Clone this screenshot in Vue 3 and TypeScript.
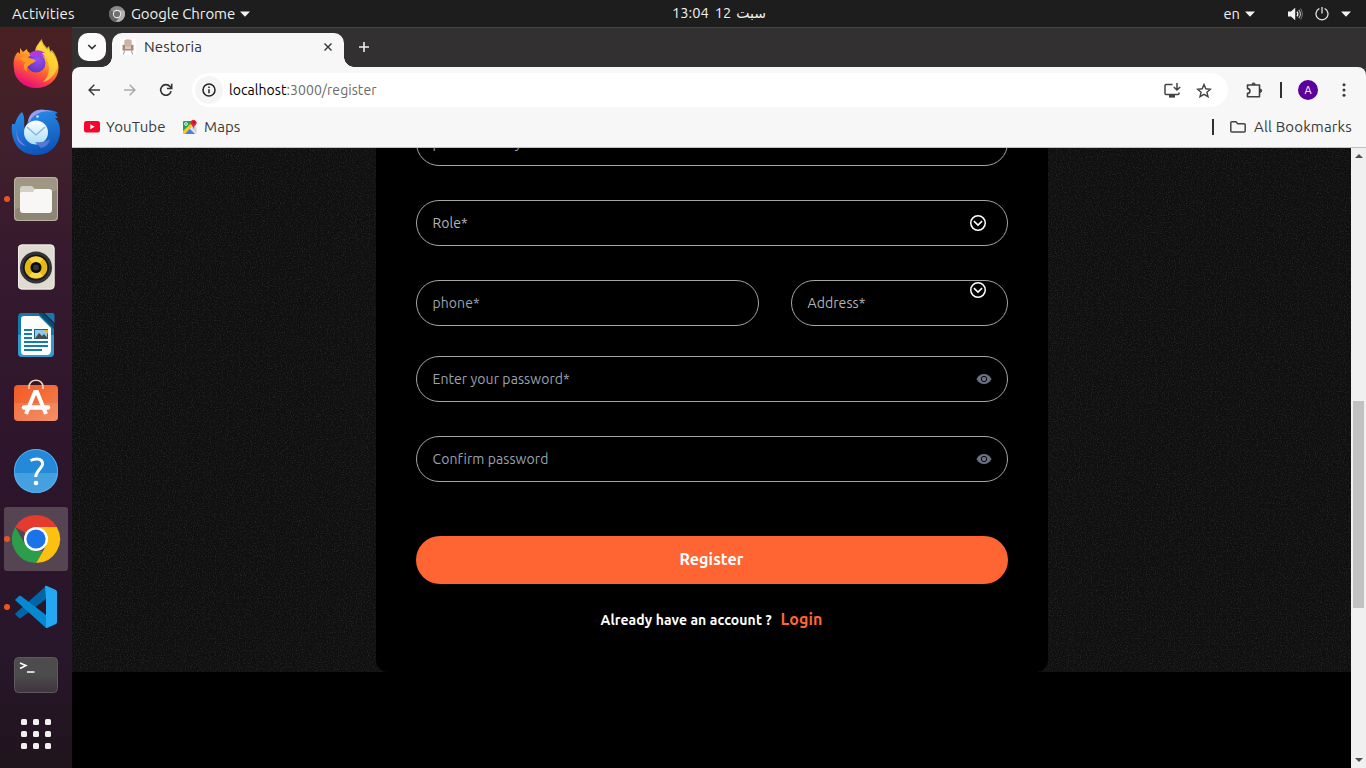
<script setup lang="ts">
interface Field {
  label: string
  icon?: 'chevron' | 'eye'
  tone: 'select' | 'input'
  cls: string
}

const topFields: Field[] = [
  { label: 'please enter your email*', tone: 'input', cls: 'email' },
  { label: 'Role*', icon: 'chevron', tone: 'select', cls: 'role' },
]
const pairFields: Field[] = [
  { label: 'phone*', tone: 'input', cls: 'phone' },
  { label: 'Address*', icon: 'chevron', tone: 'select', cls: 'address' },
]
const passwordFields: Field[] = [
  { label: 'Enter your password*', icon: 'eye', tone: 'input', cls: 'password' },
  { label: 'Confirm password', icon: 'eye', tone: 'input', cls: 'confirm' },
]
const gridDots = [0, 1, 2, 3, 4, 5, 6, 7, 8]
</script>

<template>
  <div class="desktop">
    <header class="topbar">
      <span class="activities">Activities</span>
      <svg class="app-icon" width="16" height="16" viewBox="0 0 16 16">
        <circle cx="8" cy="8" r="8" fill="#8b8b8b" />
        <path d="M8 8 1.100 4A8 8 0 0 0 7 15.900l3.500-6Z" fill="#666" />
        <path d="M8 4.300h7.100A8 8 0 0 1 7 15.900L11.400 9.800Z" fill="#b0b0b0" />
        <circle cx="8" cy="8" r="4.200" fill="#e8e8e8" />
        <circle cx="8" cy="8" r="3.100" fill="#707070" />
      </svg>
      <span class="app-name">Google Chrome</span>
      <svg class="app-caret" width="10" height="6" viewBox="0 0 10 6"><path d="M0 .5h10L5 5.800Z" fill="#f2f2f2" /></svg>
      <div class="clock" dir="ltr"><span class="time">13:04</span><span class="day">12</span><span class="arabic">سبت</span></div>
      <div class="status">
        <span class="lang">en</span>
        <svg class="lang-caret" width="10" height="6" viewBox="0 0 10 6"><path d="M0 .5h10L5 5.800Z" fill="#f2f2f2" /></svg>
        <svg class="volume" width="15" height="14" viewBox="0 0 15 14">
          <path d="M0 4.600h3L7.200.8v12.400L3 9.400H0Z" fill="#f2f2f2" />
          <path d="M9 4.600q1.700 2.400 0 4.800" fill="none" stroke="#f2f2f2" stroke-width="1.300" />
          <path d="M10.800 2.800q3.200 4.200 0 8.400" fill="none" stroke="#c4c4c4" stroke-width="1.100" />
          <path d="M12.600 1.500q3.500 5.500 0 11" fill="none" stroke="#777" stroke-width="1" />
        </svg>
        <svg class="power" width="14" height="14" viewBox="0 0 14 14">
          <path d="M4.400 1.500a6 6 0 1 0 5.200 0M7 0v6.400" fill="none" stroke="#f0f0f0" stroke-width="1.200" />
        </svg>
        <svg class="menu-caret" width="10" height="6" viewBox="0 0 10 6"><path d="M0 .5h10L5 5.800Z" fill="#f2f2f2" /></svg>
      </div>
    </header>

    <div class="workspace">
      <aside class="dock">
        <div class="slot">
          <svg width="72" height="68" viewBox="0 0 72 68">
            <defs>
              <linearGradient id="ffBody" x1=".8" y1="0" x2=".35" y2="1">
                <stop offset="0" stop-color="#fff04a" /><stop offset=".35" stop-color="#ffb22a" /><stop offset=".65" stop-color="#ff5a35" /><stop offset="1" stop-color="#e8087f" />
              </linearGradient>
              <radialGradient id="ffGlobe" cx=".6" cy=".3" r=".8">
                <stop offset="0" stop-color="#9a4df5" /><stop offset="1" stop-color="#5a34b5" />
              </radialGradient>
            </defs>
            <path d="M20 17 23 21l4-3c0 2 1 3 3 4h5c0-5 2-9 7-12 0 4 3 6 5 9l2-2 1 5 2-1c4 6 7 11 6.500 16a22.300 20 0 0 1-44.600 0c-.9-7 .1-12 4.100-16l2 2Z" transform="translate(0 2)" fill="url(#ffBody)" />
            <path d="M37 22c0-5 2-10 5-12 0 4 3 6 5 9l2-2 1 5 2-1c5 6 7 13 5 19-3 7-8 12-14 13 8-7 7-19 2-26Z" fill="#ffd93a" opacity=".75" />
            <circle cx="36" cy="34" r="9.500" fill="url(#ffGlobe)" />
            <path d="M19 29q7-3 10 0l7 2c-1 3-5 3-6 5-3 1-4 4-3 7-4-3-4-8-1-10-3-1-5-1-7-4Z" fill="#ff9a1f" />
            <path d="M29 25q8-7 16-1l-3 0 3 4q-6-4-12 0Z" fill="#b03adf" />
          </svg>
        </div>
        <div class="slot">
          <svg width="72" height="68" viewBox="0 0 72 68">
            <defs>
              <linearGradient id="tbBody" x1=".3" y1="0" x2=".6" y2="1">
                <stop offset="0" stop-color="#2b8fea" /><stop offset="1" stop-color="#0c52b8" />
              </linearGradient>
              <linearGradient id="tbMail" x1="0" y1="0" x2="0" y2="1">
                <stop offset="0" stop-color="#fff" /><stop offset="1" stop-color="#a9dcf8" />
              </linearGradient>
            </defs>
            <path d="M12 27c-2 17 7 31 24 31 16 0 24-12 24-24 0-7-2-10-5-13l3 0-3-4 3-1c-5-3-9-3-12-3-9-2-16 2-18 11l-3 8c-2-5 1-11-3-17-4 3-6 8-7 12Z" fill="url(#tbBody)" />
            <path d="M28 24q2-9 10-11 8-1 15 2-10-2-16 2-6 3-7 8Z" fill="#9e9bf0" />
            <path d="M17 29q-2 13 9 20-12-2-9-20Z" fill="#8a7ae0" />
            <circle cx="36" cy="35.500" r="12" fill="url(#tbMail)" />
            <path d="m27 30 9 8 9-8" fill="none" stroke="#8bb9df" stroke-width="1.500" />
            <path d="M50 42q-6 4-15 3l6 6q8-2 9-9Z" fill="#5678d5" />
            <circle cx="37.500" cy="19.500" r="1.300" fill="#bce9ff" />
          </svg>
        </div>
        <div class="slot">
          <i class="running"></i>
          <svg width="72" height="68" viewBox="0 0 72 68">
            <rect x="14" y="12" width="44" height="44" rx="4" fill="#9f9784" />
            <path d="M14 45 58 24v28q0 4-4 4H18q-4 0-4-4Z" fill="#8e8674" />
            <rect x="14.500" y="12.500" width="43" height="43" rx="4" fill="none" stroke="#b9b3a3" />
            <path d="M20 24q0-3 3-3h9l3 3h14v6H20Z" fill="#d3cfc5" />
            <path d="M20 29q0-2 2-2h11l2-3h14q3 0 3 3v18q0 3-3 3H23q-3 0-3-3Z" fill="#f8f7f5" />
          </svg>
        </div>
        <div class="slot">
          <svg width="72" height="68" viewBox="0 0 72 68">
            <rect x="18" y="11.500" width="36.500" height="45" rx="4" fill="#dfdbd0" />
            <rect x="18.500" y="12" width="35.500" height="44" rx="3.500" fill="none" stroke="#f0eee8" />
            <circle cx="36" cy="34.500" r="16" fill="#33333b" />
            <circle cx="36" cy="34.500" r="13" fill="#15161a" />
            <circle cx="36" cy="34.500" r="11.300" fill="#e7b90e" />
            <path d="M36 34.500 29 26q7-5 14 0Zm0 0 7 8.500q-7 4-14 0Z" fill="#fad64b" />
            <circle cx="36" cy="34.500" r="5.500" fill="#090909" />
            <circle cx="36" cy="34.500" r="3" fill="#343434" />
          </svg>
        </div>
        <div class="slot">
          <svg width="72" height="68" viewBox="0 0 72 68">
            <path d="M22 12h18l14 14v26q0 4-4 4H22q-4 0-4-4V16q0-4 4-4Z" fill="#1677aa" />
            <path d="M18 34h36v18q0 4-4 4H22q-4 0-4-4Z" fill="#349aca" />
            <path d="M24 15h15l12 12v22q0 5-4 5H24q-3 0-3-4V18q0-3 3-3Z" fill="#fdfdfd" />
            <path d="M44.500 12h8q2 0 2 2v8Z" fill="#1b79aa" />
            <path d="m39 13 15 15v-5L43 12h-4Z" fill="#064d73" />
            <path d="M24 29h8m-8 4h8m-8 4h8m-8 4h24m-24 4h24m-24 4h18" stroke="#167bad" stroke-width="1.800" />
            <rect x="34.500" y="28.500" width="13" height="9" fill="#8dccf0" stroke="#17648b" />
            <path d="m35 37.500 4-5.500 3 3 2-2 4 4.500Z" fill="#514a43" />
            <path d="M44 29h4v4Z" fill="#f5b900" />
          </svg>
        </div>
        <div class="slot">
          <svg width="72" height="68" viewBox="0 0 72 68">
            <defs><linearGradient id="bag" x1="0" y1="0" x2="1" y2="1"><stop offset="0" stop-color="#f15a24" /><stop offset="1" stop-color="#f28355" /></linearGradient></defs>
            <rect x="14" y="16" width="44" height="36" rx="4" fill="url(#bag)" />
            <path d="M14 34h44v14q0 4-4 4H18q-4 0-4-4Z" fill="#fff" opacity=".1" />
            <path d="M29 20v-2c0-9 14-9 14 0v2" fill="none" stroke="#f3d4b1" stroke-width="1.600" />
            <path d="m26 45 9-22h2l9 22" fill="none" stroke="#fff" stroke-width="4" />
            <path d="M24 38.500h24" stroke="#fff" stroke-width="4.500" stroke-linecap="round" />
          </svg>
        </div>
        <div class="slot">
          <svg width="72" height="68" viewBox="0 0 72 68">
            <circle cx="36" cy="34" r="22" fill="#2489d8" />
            <path d="M14 36h44a22 20 0 0 1-44 0Z" fill="#45a0e0" />
            <circle cx="36" cy="34" r="21.500" fill="none" stroke="#58ade7" />
            <path d="M30.500 23.500q3-1.500 6.500-1.500c4 0 6 2.500 5.500 5.500-.6 4-6.500 6-6.800 12.500" fill="none" stroke="#fff" stroke-width="3" />
            <circle cx="36" cy="46" r="2.300" fill="#fff" />
          </svg>
        </div>
        <div class="slot active">
          <i class="running"></i>
          <svg width="72" height="68" viewBox="0 0 72 68">
            <path d="M36 34 15.200 22A24 24 0 0 1 56.800 22Z" fill="#e33b2e" />
            <path d="M36 34V22h20.800A24 24 0 0 1 36 58l10.400-18Z" fill="#fcc010" />
            <path d="M15.200 22 25.600 40 36 46h7L36 58A24 24 0 0 1 15.200 22Z" fill="#2c9d48" />
            <circle cx="36" cy="34" r="12" fill="#fff" />
            <circle cx="36" cy="34" r="9.600" fill="#1a73e8" />
          </svg>
        </div>
        <div class="slot">
          <i class="running"></i>
          <svg width="72" height="68" viewBox="0 0 72 68">
            <path d="m46 13-28 25-3 3 4 4q1 .5 2 0l25-19Z" fill="#0065a9" />
            <path d="m15 27 4-4q1-.5 2 0l25 19v13Z" fill="#0788d1" />
            <path d="M45 13q1-.5 2 0l9 4q1 1 1 2v30q0 1-1 2l-9 4-1 0V26Z" fill="#24a8f2" />
          </svg>
        </div>
        <div class="slot">
          <svg width="72" height="68" viewBox="0 0 72 68">
            <defs><linearGradient id="term" x1="0" y1="0" x2="0" y2="1"><stop offset=".5" stop-color="#4c4c4c" /><stop offset="1" stop-color="#40333f" /></linearGradient></defs>
            <rect x="14.500" y="16.500" width="43" height="35" rx="4" fill="url(#term)" stroke="#5c5a5c" />
            <path d="m20 22 6 2.500-6 3M27 31h7.500" fill="none" stroke="#fff" stroke-width="1.500" />
          </svg>
        </div>
        <div class="launcher"><i v-for="d in gridDots" :key="d"></i></div>
      </aside>

      <main class="browser">
        <div class="tabstrip">
          <div class="tab-search">
            <svg width="10" height="6" viewBox="0 0 10 6"><path d="m1.300 1 3.700 3.600L8.700 1" fill="none" stroke="#303030" stroke-width="1.600" /></svg>
          </div>
          <div class="tab">
            <svg class="favicon" width="16" height="16" viewBox="0 0 16 16">
              <rect width="16" height="16" fill="#fff" />
              <path d="M4.500 1q3.500-1.500 7 0l.5 7H4Z" fill="#cdb3a6" />
              <path d="M2.500 6q2-1 2.500 1v3h6V7q.5-2 2.500-1v5.500h-11Z" fill="#a88779" />
              <path d="M5 7.500h6V10H5Z" fill="#dcc6b9" />
              <path d="m4.500 11.500-1 4m8-4 1 4" stroke="#a38b80" />
            </svg>
            <span class="tab-title">Nestoria</span>
            <svg class="tab-close" width="8" height="8" viewBox="0 0 8 8"><path d="m.5.5 7 7m0-7-7 7" stroke="#333" stroke-width="1.400" /></svg>
          </div>
          <svg class="new-tab" width="10" height="10" viewBox="0 0 10 10"><path d="M5 0v10M0 5h10" stroke="#eee" stroke-width="1.600" /></svg>
        </div>

        <div class="chrome-ui">
          <div class="toolbar">
            <svg class="back" width="12" height="12" viewBox="0 0 12 12"><path d="M12 6H1.300M6.300.8 1.100 6l5.200 5.200" fill="none" stroke="#3a3a3a" stroke-width="1.500" /></svg>
            <svg class="forward" width="12" height="12" viewBox="0 0 12 12"><path d="M0 6h10.700M5.700.8 10.900 6l-5.200 5.200" fill="none" stroke="#aaa" stroke-width="1.500" /></svg>
            <svg class="reload" width="14" height="14" viewBox="0 0 14 14"><path d="M12.100 8.100A5.300 5.300 0 1 1 11 3.500l1.500 1.700M12.700.8v4.700H8" fill="none" stroke="#333" stroke-width="1.600" /></svg>
            <div class="omnibox">
              <div class="site-info">
                <svg width="14" height="14" viewBox="0 0 14 14"><circle cx="7" cy="7" r="6" fill="none" stroke="#222" stroke-width="1.500" /><path d="M7 6.300v4M7 3.500v1.500" stroke="#222" stroke-width="1.500" /></svg>
              </div>
              <span class="url"><b>localhost</b>:3000/register</span>
              <svg class="install" width="17" height="15" viewBox="0 0 17 15">
                <path d="M8.500 1.500H2q-1 0-1 1v8q0 1 1 1h12q1 0 1-1V9.500M5 13.500h6M13 0v6.500M9.800 4 13 7l3.200-3" fill="none" stroke="#444" stroke-width="1.500" />
                <path d="M5 12h6v2.500H5Z" fill="#444" />
              </svg>
              <svg class="star" width="16" height="15" viewBox="0 0 16 15"><path d="m8 1.500 1.800 4.300 4.700.4-3.600 3 1.100 4.500-4-2.400-4 2.400 1.100-4.500-3.600-3 4.700-.4Z" fill="none" stroke="#444" stroke-width="1.400" /></svg>
            </div>
            <svg class="puzzle" width="17" height="17" viewBox="0 0 17 17">
              <path d="M1.500 3h12v11.700h-12v-3.300a2.300 2.300 0 0 0 0-4.800Z" fill="none" stroke="#404040" stroke-width="1.600" stroke-linejoin="round" />
              <path d="M6 2.500a1.600 1.600 0 0 1 3.200 0ZM14 7a1.600 1.600 0 0 1 0 3.400Z" fill="#404040" stroke="#404040" />
            </svg>
            <i class="bar"></i>
            <div class="avatar">A</div>
            <svg class="kebab" width="4" height="14" viewBox="0 0 4 14"><g fill="#3a3a3a"><circle cx="2" cy="1.800" r="1.500" /><circle cx="2" cy="7" r="1.500" /><circle cx="2" cy="12.200" r="1.500" /></g></svg>
          </div>
          <div class="bookmarks">
            <svg class="yt" width="16" height="12" viewBox="0 0 16 12"><rect width="16" height="11.500" rx="2.500" fill="#f8042d" /><path d="m6.300 3.300 4.300 2.500-4.300 2.500Z" fill="#fff" /></svg>
            <span class="bm-youtube">YouTube</span>
            <svg class="maps" width="16" height="16" viewBox="0 0 16 16">
              <rect x="1" y="2" width="13" height="13" rx="1" fill="#dfe3ea" />
              <path d="M1 3q0-1 1-1h7v5L1 14.500Z" fill="#1da35a" />
              <path d="m2 15 5.500-5.500L13 15Z" fill="#4c7ee9" />
              <path d="m9 8 5.500 6.500V9L11 6Z" fill="#cdd2da" />
              <path d="m1 12 8-7.500v4L3 15H1Z" fill="#fbc822" />
              <path d="M11.500 10q-.3-2.500-2-4A3 3 0 1 1 14 5.500q-2.200 2-2.500 4.500Z" fill="#e8243c" />
              <circle cx="11.800" cy="3.300" r="1.100" fill="#8d1020" />
              <circle cx="4" cy="5" r="1.400" fill="none" stroke="#fff" stroke-width=".9" />
            </svg>
            <span class="bm-maps">Maps</span>
            <i class="bar"></i>
            <svg class="folder" width="16" height="12" viewBox="0 0 16 12"><path d="M.8 10V1.800q0-1 1-1h4l2 2h6.400q1 0 1 1V10q0 1-1 1H1.800q-1 0-1-1Z" fill="none" stroke="#444" stroke-width="1.500" /></svg>
            <span class="bm-all">All Bookmarks</span>
          </div>
        </div>

        <div class="viewport">
          <div class="page">
            <section class="register-section">
              <svg class="grain" width="1279" height="524">
                <filter id="grain" x="0" y="0" width="100%" height="100%" color-interpolation-filters="sRGB">
                  <feTurbulence type="fractalNoise" baseFrequency=".83" numOctaves="2" seed="4" />
                  <feColorMatrix values="1 0 0 0 0  1 0 0 0 0  1 0 0 0 0  0 0 0 0 1" />
                  <feComponentTransfer>
                    <feFuncR type="table" tableValues=".06 .06 .06 .06 .061 .066 .095 .12 .14 .14 .14" />
                    <feFuncG type="table" tableValues=".06 .06 .06 .06 .061 .066 .095 .12 .14 .14 .14" />
                    <feFuncB type="table" tableValues=".06 .06 .06 .06 .061 .066 .095 .12 .14 .14 .14" />
                  </feComponentTransfer>
                </filter>
                <rect width="1279" height="524" filter="url(#grain)" />
              </svg>
              <form class="card" @submit.prevent>
                <div v-for="f in topFields" :key="f.label" class="field" :class="[f.tone, f.cls]">
                  <span>{{ f.label }}</span>
                  <svg v-if="f.icon" class="chevron" width="16" height="16" viewBox="0 0 16 16"><circle cx="8" cy="8" r="7.250" fill="none" stroke="#fff" stroke-width="1.500" /><path d="m3.900 6.100 4.100 4 4.100-4" fill="none" stroke="#fff" stroke-width="1.500" /></svg>
                </div>
                <div class="pair">
                  <div v-for="f in pairFields" :key="f.label" class="field" :class="[f.tone, f.cls]">
                    <span>{{ f.label }}</span>
                    <svg v-if="f.icon" class="chevron" width="16" height="16" viewBox="0 0 16 16"><circle cx="8" cy="8" r="7.250" fill="none" stroke="#fff" stroke-width="1.500" /><path d="m3.900 6.100 4.100 4 4.100-4" fill="none" stroke="#fff" stroke-width="1.500" /></svg>
                  </div>
                </div>
                <div v-for="f in passwordFields" :key="f.label" class="field" :class="[f.tone, f.cls]">
                  <span>{{ f.label }}</span>
                  <svg class="eye" width="16" height="12" viewBox="0 0 16 12"><path d="M.5 6C3.500-.8 12.500-.8 15.500 6c-3 6.800-12 6.800-15 0Z" fill="#6b7080" /><circle cx="8" cy="6" r="2.700" fill="none" stroke="#0b0b0f" stroke-width="1" /></svg>
                </div>
                <button class="submit" type="submit"><span>Register</span></button>
                <p class="signin"><span class="question">Already have an account ?</span><a class="login">Login</a></p>
              </form>
            </section>
          </div>
          <div class="scrollbar">
            <svg width="8" height="4" viewBox="0 0 8 4"><path d="M0 4 4 0l4 4Z" fill="#505050" /></svg>
            <div class="thumb"></div>
            <svg class="down" width="8" height="4" viewBox="0 0 8 4"><path d="m0 0 4 4 4-4Z" fill="#505050" /></svg>
          </div>
        </div>
      </main>
    </div>
  </div>
</template>

<style>
html, body { margin: 0; background: #000; }
</style>

<style scoped>
.desktop { width: 1366px; height: 768px; overflow: hidden; display: flex; flex-direction: column; font: 15px/20px "Ubuntu", "Noto Sans", "DejaVu Sans", sans-serif; }
.desktop * { box-sizing: border-box; }
svg { display: block; flex: none; }
span { white-space: nowrap; }

.topbar { height: 27px; flex: none; background: #1d1d1d; color: #f0f0f0; display: flex; align-items: center; padding: 0 15px 0 12px; }
.activities { width: 97px; letter-spacing: .1px; }
.app-icon { margin-right: 6px; }
.app-name { width: 109px; letter-spacing: -.08px; }
.clock { margin-left: 422px; display: flex; align-items: center; font-size: 14.670px; height: 20px; margin-top: -1px; }
.day { margin-left: 6px; }
.arabic { margin-left: 5px; font-family: "DejaVu Sans", sans-serif; font-size: 14px; }
.status { margin-left: auto; display: flex; align-items: center; font-size: 14.670px; }
.lang-caret { margin-left: 5px; margin-right: 33px; }
.volume { margin-right: 12px; }
.power { margin-right: 12px; }

.workspace { flex: 1; display: flex; min-height: 0; }
.dock { width: 72px; flex: none; padding-top: 2px; background: linear-gradient(#4a2022, #40202b 15%, #36192e 32%, #2d152b 60%, #28162a 85%, #20141c); }
.slot { height: 68px; position: relative; }
.slot svg { position: relative; }
.slot.active::before { content: ""; position: absolute; left: 4px; top: 2px; width: 64px; height: 64px; border-radius: 3px; background: #554452; }
.running { position: absolute; z-index: 1; left: 4px; top: 31px; width: 6px; height: 6px; border-radius: 50%; background: #e95420; }
.launcher { margin: 10px 0 0 21px; width: 30px; display: grid; grid-template-columns: repeat(3, 6px); gap: 6px; }
.launcher i { height: 6px; border-radius: 1.5px; background: #f1f0ed; }

.browser { flex: 1; min-width: 0; display: flex; flex-direction: column; background: #323031; }
.tabstrip { height: 40px; flex: none; border-top: 1px solid #454344; padding: 5px 0 0 6px; display: flex; color: #333; }
.tab-search { width: 28px; height: 28px; border-radius: 10px; background: #fbfbfb; display: flex; align-items: center; justify-content: center; }
.tab { position: relative; margin-left: 6px; width: 232px; height: 34px; border-radius: 10px 10px 0 0; background: #f7f7f7; display: flex; align-items: center; padding: 0 12px 6px 8px; }
.tab::before, .tab::after { content: ""; position: absolute; bottom: 0; width: 10px; height: 10px; }
.tab::before { left: -10px; background: radial-gradient(circle at 0 0, transparent 9.500px, #f7f7f7 10px); }
.tab::after { right: -10px; background: radial-gradient(circle at 100% 0, transparent 9.500px, #f7f7f7 10px); }
.tab-title { margin-left: 8px; letter-spacing: .1px; }
.tab-close { margin-left: auto; }
.new-tab { margin: 9px 0 0 15px; }

.chrome-ui { height: 81px; flex: none; background: #f7f7f7; border-bottom: 1px solid #c2c2c2; border-radius: 8px 8px 0 0; color: #3a3a3a; }
.toolbar { height: 46px; display: flex; align-items: center; padding: 0 20px 0 16px; }
.forward { margin-left: 24px; }
.reload { margin-left: 23px; }
.omnibox { flex: none; margin-left: 19px; width: 1036px; height: 34px; border-radius: 17px; background: #fff; display: flex; align-items: center; padding: 0 16px 0 3px; }
.site-info { width: 28px; height: 28px; border-radius: 50%; background: #f5f5f5; display: flex; align-items: center; justify-content: center; }
.url { margin-left: 6px; color: #6b6b6b; font-size: 14px; letter-spacing: .06px; }
.url b { font-weight: 400; color: #000; }
.install { margin-left: auto; }
.star { margin-left: 15px; }
.puzzle { margin-left: 18px; }
.bar { flex: none; width: 2px; height: 16px; background: #303030; }
.toolbar .bar { margin-left: 17px; }
.avatar { flex: none; margin-left: 16px; width: 20px; height: 20px; border-radius: 50%; background: #5b009c; color: #fff; font-size: 11px; text-align: center; line-height: 20px; }
.kebab { margin-left: 24px; }
.bookmarks { height: 28px; display: flex; align-items: center; padding: 0 14px 0 12px; }
.bm-youtube { width: 76px; margin-left: 6px; letter-spacing: .1px; }
.bm-maps { margin-left: 6px; letter-spacing: .1px; }
.bm-all { letter-spacing: .14px; }
.bookmarks .bar { margin-left: auto; }
.folder { margin: 0 8px 0 16px; }

.viewport { flex: 1; min-height: 0; display: flex; background: #000; }
.page { width: 1279px; overflow: hidden; }
.register-section { position: relative; height: 524px; overflow: hidden; background: #111; }
.grain { position: absolute; inset: 0; }
.card { position: relative; width: 672px; height: 552px; margin: -28px 0 0 304px; padding: 0 40px; background: #000; border-radius: 12px; }
.field { height: 46px; border: 1px solid #a5a5a5; border-radius: 23px; display: flex; align-items: center; justify-content: space-between; padding: 0 15px 0 15.500px; font-size: 14px; letter-spacing: .08px; color: #9ca3af; margin-bottom: 34px; }
.field.select { color: #b4b4b4; }
.pair { display: flex; gap: 32px; margin-bottom: 30px; }
.pair .field { margin-bottom: 0; }
.phone { width: 343px; }
.address { width: 217px; }
.chevron { margin-right: 6px; }
.address .chevron { align-self: flex-start; margin-top: 1px; }
.submit { display: block; width: 592px; height: 48px; margin-top: 54px; border: 0; border-radius: 24px; background: #ff6533; color: #fff; padding: 0 1px 2px 0; font: 700 16px/46px "Ubuntu", "Noto Sans", sans-serif; letter-spacing: .1px; }
.signin { margin: 25px 0 0; padding-left: 184.500px; height: 22px; display: flex; align-items: center; font-weight: 700; color: #fff; }
.question { width: 180px; font-size: 14px; letter-spacing: .08px; }
.login { color: #ff6533; font-size: 16px; margin-bottom: 2px; letter-spacing: .05px; }

.scrollbar { width: 15px; background: #f0f0f0; display: flex; flex-direction: column; align-items: center; padding: 6px 0; }
.thumb { width: 11px; height: 207px; margin-top: 243px; background: #c1c1c1; }
.down { margin-top: auto; }
</style>
